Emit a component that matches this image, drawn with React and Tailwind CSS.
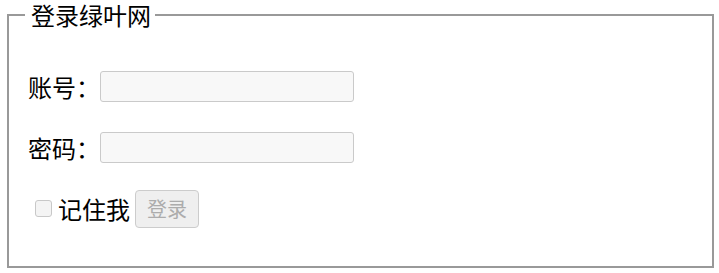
export default function App() {
  const font = { fontFamily: '"Noto Sans CJK SC", "Noto Sans", sans-serif' };
  return (
    <div className="w-[719px] h-[273px] bg-white pl-[7px] pr-[5px]" style={font}>
      <fieldset className="border-2 border-solid border-[#999999] pl-4 pb-[37px] text-black">
        <legend className="pl-[6px] pr-[4px] text-[24px] leading-[30px]">登录绿叶网</legend>
        <div className="pl-[3px] mt-[36px] flex flex-col gap-5">
          <div className="h-[41px] flex items-center">
            <span className="text-[24px] leading-none">账号：</span>
            <input
              type="text"
              className="w-[254px] h-[31px] border border-[#cacaca] rounded-[3px] bg-[#f8f8f8] outline-none"
            />
          </div>
          <div className="h-[41px] flex items-center">
            <span className="text-[24px] leading-none">密码：</span>
            <input
              type="password"
              className="w-[254px] h-[31px] border border-[#cacaca] rounded-[3px] bg-[#f8f8f8] outline-none"
            />
          </div>
          <div className="h-[41px] flex items-center">
            <input
              type="checkbox"
              className="appearance-none ml-[7px] w-[17px] h-[17px] border border-[#c8c8c8] rounded-[3px] bg-[#f4f4f4]"
            />
            <span className="ml-[6px] text-[24px] leading-none">记住我</span>
            <button className="ml-[5px] h-[38px] w-[64px] border border-[#cccccc] rounded-[4px] bg-[#efefef] text-[#acacac] text-[20px] leading-none">
              登录
            </button>
          </div>
        </div>
      </fieldset>
    </div>
  );
}
